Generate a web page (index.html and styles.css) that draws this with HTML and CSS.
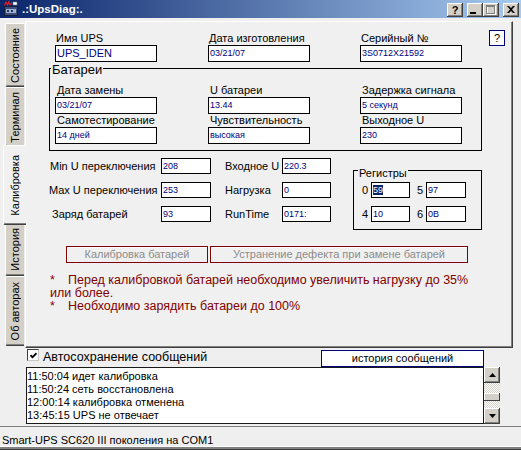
FILE: index.html
```html
<!DOCTYPE html>
<html lang="ru">
<head>
<meta charset="utf-8">
<title>.:UpsDiag:.</title>
<link rel="stylesheet" href="styles.css">
</head>
<body>
<div class="window">
  <header class="titlebar">
    <svg class="app-icon" width="16" height="16" viewBox="0 0 16 16">
      <rect x="1.5" y="5.5" width="13" height="9" fill="#3C4E7A" stroke="#141C3A"/>
      <rect x="3" y="8" width="10" height="4" fill="#9FB2D4"/>
      <rect x="4" y="9" width="2" height="2" fill="#2A3560"/>
      <rect x="8" y="9" width="2" height="2" fill="#2A3560"/>
      <path d="M1.5 4.5L3 1l1.5 3 1.5-3.5 1 3.5 2-2.5" fill="none" stroke="#D81E1E" stroke-width="1.2"/>
      <rect x="10" y="1" width="4" height="3" fill="#fff" stroke="#777" stroke-width="0.6"/>
    </svg>
    <span class="title">.:UpsDiag:.</span>
    <div class="caption-buttons">
      <span class="cbtn cbtn-help">?</span>
      <span class="cbtn cbtn-min"><span class="min-bar"></span></span>
      <span class="cbtn cbtn-max">
        <svg width="10" height="10" viewBox="0 0 10 10"><g fill="none" shape-rendering="crispEdges"><rect x="1.5" y="1.5" width="8" height="8" stroke="#fff"/><rect x="0.5" y="0.5" width="8" height="8" stroke="#808080"/><line x1="0" y1="1.5" x2="9" y2="1.5" stroke="#808080"/></g></svg>
      </span>
      <span class="cbtn cbtn-close">
        <svg width="8" height="7" viewBox="0 0 8 7"><path d="M0 0h2l2 2 2-2h2L5 3.5 8 7H6L4 5 2 7H0l3-3.5z" fill="#000"/></svg>
      </span>
    </div>
  </header>

  <div class="main">
    <nav class="tabs">
      <div class="tab tab-state"><span>Состояние</span></div>
      <div class="tab tab-term"><span>Терминал</span></div>
      <div class="tab tab-calib active"><span>Калибровка</span></div>
      <div class="tab tab-hist"><span>История</span></div>
      <div class="tab tab-about"><span>Об авторах</span></div>
    </nav>

    <section class="panel">
      <div class="top-grid">
        <div class="fld"><div class="lbl">Имя UPS</div><div class="inp inp-big">UPS_IDEN</div></div>
        <div class="fld"><div class="lbl">Дата изготовления</div><div class="inp">03/21/07</div></div>
        <div class="fld"><div class="lbl">Серийный №</div><div class="inp">3S0712X21592</div></div>
        <div class="help-btn">?</div>
      </div>

      <div class="group batt">
        <span class="group-title">Батареи</span>
        <div class="batt-grid">
          <div class="fld"><div class="lbl">Дата замены</div><div class="inp">03/21/07</div></div>
          <div class="fld"><div class="lbl">U батареи</div><div class="inp">13.44</div></div>
          <div class="fld"><div class="lbl">Задержка сигнала</div><div class="inp">5 секунд</div></div>
          <div class="fld"><div class="lbl">Самотестирование</div><div class="inp">14 дней</div></div>
          <div class="fld"><div class="lbl">Чувствительность</div><div class="inp">высокая</div></div>
          <div class="fld"><div class="lbl">Выходное U</div><div class="inp">230</div></div>
        </div>
      </div>

      <div class="calib">
        <div class="cal-grid">
          <div class="cl">Min U переключения</div><div class="inp">208</div><div></div><div class="cl">Входное U</div><div class="inp">220.3</div>
          <div class="cl cl-max">Max U переключения</div><div class="inp">253</div><div></div><div class="cl">Нагрузка</div><div class="inp">0</div>
          <div class="cl cl-charge">Заряд батарей</div><div class="inp">93</div><div></div><div class="cl">RunTime</div><div class="inp">0171:</div>
        </div>
        <div class="group regs">
          <span class="group-title">Регистры</span>
          <div class="reg-grid">
            <span class="rn">0</span><div class="inp"><span class="sel">59</span></div><span class="rn rn2">5</span><div class="inp">97</div>
            <span class="rn">4</span><div class="inp">10</div><span class="rn rn2">6</span><div class="inp">0B</div>
          </div>
        </div>
      </div>

      <div class="actions">
        <button class="act act-cal" type="button">Калибровка батарей</button>
        <button class="act act-fix" type="button">Устранение дефекта при замене батарей</button>
      </div>

      <div class="notes">
        <div><span class="star">*</span>Перед калибровкой батарей необходимо увеличить нагрузку до 35%</div>
        <div>или более.</div>
        <div><span class="star">*</span>Необходимо зарядить батареи до 100%</div>
      </div>
    </section>
  </div>

  <div class="log-head">
    <label class="autosave">
      <span class="cb"><svg width="7" height="7" viewBox="0 0 7 7"><path d="M0.5 3.2l2 2 4-4" fill="none" stroke="#000" stroke-width="1.7"/></svg></span>
      <span class="autosave-text">Автосохранение сообщений</span>
    </label>
    <div class="hist-btn">история сообщений</div>
  </div>

  <div class="log-row">
    <div class="log">
      <div>11:50:04 идет калибровка</div>
      <div>11:50:24 сеть восстановлена</div>
      <div>12:00:14 калибровка отменена</div>
      <div>13:45:15 UPS не отвечает</div>
    </div>
    <div class="scroll">
      <div class="sb-btn"><svg width="7" height="4" viewBox="0 0 7 4"><path d="M3.5 0L7 4H0z"/></svg></div>
      <div class="sb-track sb-track-top"></div>
      <div class="sb-thumb"></div>
      <div class="sb-track sb-track-bottom"></div>
      <div class="sb-btn"><svg width="7" height="4" viewBox="0 0 7 4"><path d="M0 0h7L3.5 4z"/></svg></div>
    </div>
  </div>

  <footer class="statusbar">Smart-UPS SC620 III поколения на COM1</footer>
</div>
</body>
</html>
```

FILE: styles.css
```css
* { box-sizing: border-box; }
html, body { margin: 0; padding: 0; }
body { width: 521px; height: 450px; overflow: hidden; background: #EFEFEF; }

.window {
  width: 521px;
  height: 450px;
  background: #EFEFEF;
  font-family: "Liberation Sans", Arial, sans-serif;
  font-size: 11px;
  color: #000;
  display: flex;
  flex-direction: column;
  overflow: hidden;
}

/* ---------- title bar ---------- */
.titlebar {
  height: 18px;
  flex: none;
  display: flex;
  align-items: center;
  padding: 0 2px 0 3px;
  background: linear-gradient(to right, #0A246A, #A6CAF0);
}
.app-icon { flex: none; display: block; }
.title { margin-left: 3px; color: #fff; font-weight: bold; font-size: 11.5px; }
.caption-buttons { margin-left: auto; display: flex; margin-top: 1px; }
.cbtn {
  width: 16px;
  height: 14px;
  background: #D4D0C8;
  box-shadow: inset -1px -1px #404040, inset 1px 1px #fff, inset -2px -2px #808080, inset 2px 2px #D4D0C8;
  display: flex;
  align-items: center;
  justify-content: center;
}
.cbtn-help { margin-right: 4px; font-weight: bold; font-size: 11px; line-height: 14px; }
.cbtn-max { margin-right: 4px; }
.cbtn-min { align-items: flex-end; padding: 0 4px 3px 0; }
.min-bar { width: 6px; height: 2px; background: #000; }
.cbtn svg { display: block; }

/* ---------- main area ---------- */
.main {
  flex: none;
  height: 327px;
  margin-top: 3px;
  padding-left: 3px;
  display: flex;
}
.tabs {
  width: 22px;
  flex: none;
  display: flex;
  flex-direction: column;
  padding-top: 2px;
}
.tab {
  flex: none;
  margin-left: 2px;
  width: 19px;
  background: #D4D0C8;
  border-left: 1px solid #fff;
  border-top: 1px solid #fff;
  border-bottom: 1px solid #404040;
  box-shadow: inset 0 -1px #808080;
  border-radius: 2px 0 0 2px;
  display: flex;
  align-items: center;
  justify-content: center;
}
.tab span {
  writing-mode: vertical-rl;
  transform: rotate(180deg);
  white-space: nowrap;
  line-height: 13px;
}
.tab-state { height: 64px; }
.tab-term { height: 60px; }
.tab-calib { height: 76px; }
.tab-hist { height: 53px; }
.tab-about { height: 70px; }
.tab.active {
  margin-left: 0;
  width: 23px;
  margin-right: -1px;
  margin-top: -2px;
  margin-bottom: -2px;
  height: 80px;
  background: #F0F0F0;
  box-shadow: inset 0 -1px #808080;
  position: relative;
  z-index: 1;
}

.panel {
  flex: none;
  width: 488px;
  height: 327px;
  background: #F0F0F0;
  border-top: 1px solid #fff;
  border-left: 1px solid #fff;
  border-right: 1px solid #404040;
  border-bottom: 1px solid #404040;
  box-shadow: inset -1px -1px #808080;
}

/* fields */
.lbl { height: 14px; line-height: 14px; padding-left: 1px; white-space: nowrap; }
.inp {
  width: 102px;
  height: 17px;
  border: 1px solid #000;
  background: #fff;
  color: #000080;
  font-size: 9px;
  line-height: 15px;
  padding-left: 1px;
  white-space: nowrap;
  overflow: hidden;
}
.inp-big { font-size: 11px; }

.top-grid {
  display: grid;
  grid-template-columns: 153px 152px 129px 16px;
  margin: 9px 0 0 29px;
}
.help-btn {
  width: 16px;
  height: 16px;
  margin-top: -1px;
  border: 1px solid #000080;
  background: #fff;
  font-size: 11px;
  line-height: 14px;
  text-align: center;
}

/* group boxes */
.group { position: relative; border: 1px solid #000; }
.group-title {
  position: absolute;
  background: #F0F0F0;
  padding: 0 1px;
  white-space: nowrap;
}
.batt {
  margin: 6px 0 0 23px;
  width: 433px;
  padding: 15px 0 6px 5px;
}
.batt .group-title { top: -6px; left: 1px; font-size: 13px; line-height: 14px; }
.batt-grid { display: grid; grid-template-columns: 153px 152px 102px; }
.batt .lbl { height: 13px; line-height: 13px; padding-left: 2px; }

/* calibration block */
.calib {
  display: flex;
  align-items: flex-start;
  margin: 7px 0 0 24px;
}
.cal-grid {
  display: grid;
  grid-template-columns: 111px 50px 14px 57px 49px;
  grid-auto-rows: 16px;
  row-gap: 8px;
  align-items: center;
}
.cal-grid .inp, .reg-grid .inp { width: auto; height: 16px; line-height: 14px; }
.cl { white-space: nowrap; line-height: 13px; }
.cl-max { margin-left: -1px; }
.cl-charge { margin-left: 2px; }

.regs {
  margin: 12px 0 0 22px;
  width: 129px;
  padding: 11px 0 7px 8px;
}
.regs .group-title { top: -4px; left: 4px; font-size: 11px; line-height: 13px; }
.reg-grid {
  display: grid;
  grid-template-columns: 9px 39px 16px 40px;
  grid-auto-rows: 16px;
  row-gap: 8px;
  align-items: center;
}
.rn { line-height: 13px; font-size: 11px; }
.rn2 { padding-left: 7px; }
.sel { background: #0A246A; color: #fff; }

/* buttons */
.actions { display: flex; gap: 2px; margin: 16px 0 0 40px; }
.act {
  height: 17px;
  padding: 0;
  margin: 0;
  border: 1px solid #800000;
  box-shadow: inset 1px 1px #fff;
  background: #F0F0F0;
  color: #8C8C8C;
  font: 11px "Liberation Sans", Arial, sans-serif;
  line-height: 15px;
  text-align: center;
}
.act-cal { width: 142px; }
.act-fix { width: 258px; }

/* notes */
.notes {
  margin: 11px 0 0 24px;
  color: #800000;
  font-size: 12.5px;
  line-height: 13px;
  white-space: nowrap;
}
.star { display: inline-block; width: 18px; }

/* ---------- message log ---------- */
.log-head {
  flex: none;
  height: 19px;
  display: flex;
  padding-left: 27px;
}
.autosave { width: 294px; display: flex; align-items: flex-start; }
.cb {
  width: 12px;
  height: 12px;
  flex: none;
  margin-top: 1px;
  background: #fff;
  border: 1px solid #404040;
  border-right-color: #C8C8C8;
  border-bottom-color: #C8C8C8;
  display: flex;
  align-items: center;
  justify-content: center;
}
.cb svg { display: block; }
.autosave-text { margin: 2px 0 0 4px; font-size: 12.5px; line-height: 14px; white-space: nowrap; }
.hist-btn {
  width: 163px;
  height: 17px;
  margin-top: 2px;
  border: 1px solid #000080;
  background: #fff;
  text-align: center;
  line-height: 15px;
  font-size: 11px;
}

.log-row { flex: none; height: 57px; display: flex; padding-left: 26px; }
.log {
  width: 458px;
  height: 57px;
  border: 1px solid #1A1A1A;
  background: #fff;
  padding-top: 2px;
  font-size: 11px;
  line-height: 13px;
  white-space: nowrap;
  overflow: hidden;
}
.scroll { width: 16px; height: 57px; display: flex; flex-direction: column; }
.sb-btn {
  height: 16px;
  flex: none;
  background: #D4D0C8;
  box-shadow: inset -1px -1px #404040, inset 1px 1px #fff, inset -2px -2px #808080;
  display: flex;
  align-items: center;
  justify-content: center;
}
.sb-btn svg { display: block; }
.sb-track {
  background: repeating-conic-gradient(#D4D0C8 0 25%, #fff 0 50%) 0 0 / 2px 2px;
}
.sb-track-top { height: 10px; }
.sb-track-bottom { flex: 1; }
.sb-thumb {
  height: 8px;
  flex: none;
  background: #D4D0C8;
  box-shadow: inset -1px -1px #404040, inset 1px 1px #fff;
}

/* ---------- status bar ---------- */
.statusbar {
  flex: none;
  height: 24px;
  margin-top: 2px;
  border-top: 1px solid #808080;
  box-shadow: inset 0 -1px #404040, inset 0 -3px #808080, inset 0 -4px #fff;
  padding: 7px 0 0 2px;
  font-size: 11px;
  line-height: 13px;
  white-space: nowrap;
}
```
